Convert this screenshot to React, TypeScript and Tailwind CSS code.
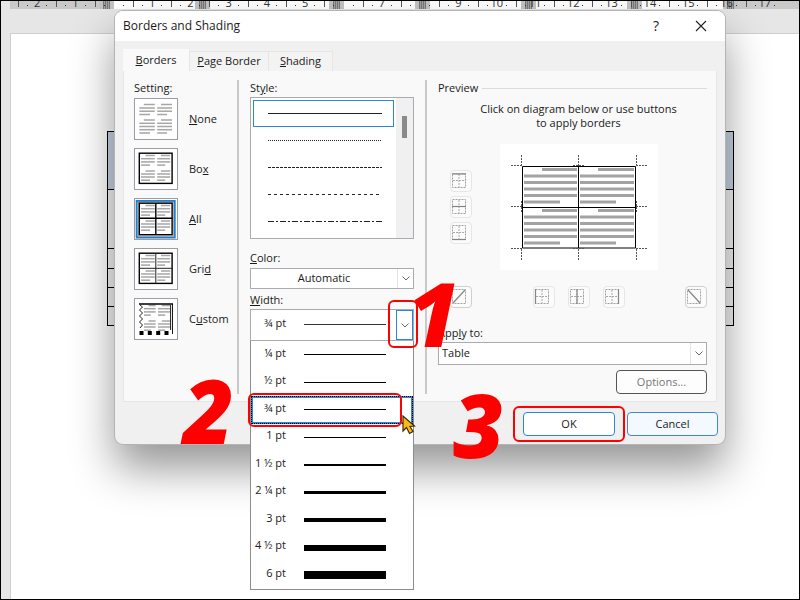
import { useState } from 'react';
import type { ReactNode } from 'react';

const rulerNumbers = ['2', '1', '', '1', '2', '3', '4', '5', '', '7', '', '9', '10', '11', '12', '13', '14', '15', '16', '17'];

const columnMarkers = [
  'left-[89px]',
  'left-[185px]',
  'left-[319px]',
  'left-[405px]',
  'left-[511px]',
  'left-[617px]',
  'left-[713px]',
];

const lineStyles = [
  { name: 'Solid', dash: '' },
  { name: 'Dotted', dash: '1 1' },
  { name: 'Short dash', dash: '3 1' },
  { name: 'Dash', dash: '3 3' },
  { name: 'Dash dot', dash: '6 2 2 2' },
];

const widths = [
  { label: '¼ pt', line: 'h-px' },
  { label: '½ pt', line: 'h-px' },
  { label: '¾ pt', line: 'h-px' },
  { label: '1 pt', line: 'h-px' },
  { label: '1 ½ pt', line: 'h-[2px]' },
  { label: '2 ¼ pt', line: 'h-[3px]' },
  { label: '3 pt', line: 'h-1' },
  { label: '4 ½ pt', line: 'h-[6px]' },
  { label: '6 pt', line: 'h-2' },
];

type Kind = 'none' | 'box' | 'all' | 'grid' | 'custom';

const settings: { kind: Kind; label: ReactNode }[] = [
  { kind: 'none', label: <><u>N</u>one</> },
  { kind: 'box', label: <>Bo<u>x</u></> },
  { kind: 'all', label: <><u>A</u>ll</> },
  { kind: 'grid', label: <>Gri<u>d</u></> },
  { kind: 'custom', label: <>C<u>u</u>stom</> },
];

const Chevron = () => (
  <svg viewBox="0 0 8 5" className="w-2 h-[5px]" fill="none" stroke="#666" strokeWidth="1">
    <path d="M0.5 0.5L4 4L7.5 0.5" />
  </svg>
);

const Ruler = () => (
  <div className="relative h-2 overflow-hidden bg-white ml-[9px] text-[11px] text-[#333]">
    <div className="absolute inset-y-0 left-0 w-[104px] bg-[#c9c9c9]" />
    <div className="absolute inset-y-0 left-[723px] right-0 bg-[#c9c9c9]" />
    {columnMarkers.map((pos) => (
      <div key={pos} className={`absolute inset-y-0 w-[15px] bg-[#c4c4c4] px-1 ${pos}`}>
        <div className="h-full bg-[repeating-linear-gradient(90deg,#777_0_1px,#a5a5a5_1px_2px)]" />
      </div>
    ))}
    <div className="relative flex h-2 ml-2 mr-[15px]">
      {rulerNumbers.map((n, i) => (
        <div key={i} className="relative flex-1 flex justify-between items-center px-[9px]">
          <span className="absolute left-0 top-0 w-px h-[6px] bg-[#555]" />
          <span className="w-px h-px bg-[#333]" />
          <span className="w-3 flex justify-center leading-none -mt-[5px]">{n}</span>
          <span className="w-px h-px bg-[#333]" />
        </div>
      ))}
    </div>
  </div>
);

const DocumentTable = () => (
  <table className="w-full border-collapse bg-[#f3f3f3]">
    <tbody>
      {['h-[58px] bg-[#c8d3e3]', 'h-[59px]', 'h-5', 'h-[19px]', 'h-[19px]', 'h-[19px]'].map((row, i) => (
        <tr key={i} className={row}>
          <td className="border border-black" />
        </tr>
      ))}
    </tbody>
  </table>
);

const SettingIcon = ({ kind }: { kind: Kind }) => {
  const framed = kind === 'box' || kind === 'all' || kind === 'grid';
  const rows = kind === 'none' ? [6.5, 10, 13.2, 16.5, 22, 25.3, 28.5, 31.7, 35] : [7.5, 10.7, 13.9, 17.1, 23, 26, 29, 32.2];
  const x = kind === 'custom' ? 10 : kind === 'none' ? 5.3 : 7;
  const end = kind === 'none' ? 38 : 36.2;
  const mid = kind === 'custom' ? 22.8 : 22;
  return (
    <svg viewBox="0 0 44 42" className="w-[44px] h-[42px] shrink-0">
      <rect x="0.5" y="0.5" width="43" height="41" fill="#fff" stroke="#9a9ca6" />
      {kind === 'all' && (
        <>
          <rect x="2.7" y="3" width="38" height="36.5" fill="#fff" stroke="#1b7fd4" strokeWidth="2" />
          <rect x="4.2" y="4.2" width="35" height="34" fill="none" stroke="#a79d94" />
        </>
      )}
      <g stroke="#a6a6a6" strokeWidth="1.5">
        {rows.map((y, i) => {
          const first = i === 0 || i === 4;
          const last = i === 3 || i === rows.length - 1;
          return (
            <g key={y}>
              <path d={`M${first ? x + 4.5 : x} ${y}H${last ? mid - 6 : mid - 1.2}`} />
              <path d={`M${first ? mid + 5 : mid + 1.2} ${y}H${last ? end - 5 : end}`} />
            </g>
          );
        })}
      </g>
      {framed && <rect x="5.3" y="5.2" width="32.8" height={kind === 'all' ? 31.5 : 30.2} fill="none" stroke="#000" strokeWidth="1.4" />}
      {kind === 'all' && <path d="M21.8 5V37M5 20.3H38.4" stroke="#000" strokeWidth="1.4" />}
      {kind === 'grid' && <path d="M21.8 5V36M5 20.3H38.4" stroke="#222" strokeWidth="1" />}
      {kind === 'custom' && (
        <>
          <path d="M5 6H39" stroke="#000" strokeWidth="1.6" />
          <path d="M38.5 6V36M36.6 7V32" stroke="#000" strokeWidth="0.9" />
          <path
            d="M6 7L8.5 9L5.5 12L8.5 15L5.5 18L8.5 21L5.5 24L8.5 27L6 30"
            fill="none"
            stroke="#222"
            strokeWidth="1"
          />
          <path d="M5.5 35H9.5M13.8 35H17.8M22.2 35H26.2M30.5 35H34.5" stroke="#000" strokeWidth="4" />
        </>
      )}
    </svg>
  );
};

const BorderButton = ({ label, line, strong }: { label: string; line: string; strong?: boolean }) => {
  const diagonal = line.includes('L');
  return (
    <button
      aria-label={label}
      className={`w-[22px] h-[22px] rounded border bg-[#fbfbfb] ${strong ? 'border-[#cfcfcf]' : 'border-[#e6e6e6]'}`}>
      <svg viewBox="0 0 20 20" className="w-5 h-5" fill="none">
        <rect x="1.5" y="2.5" width="13" height="14" stroke="#a0a0a0" strokeDasharray="2 1" />
        {!diagonal && <path d="M8 3V16M2 9.5H15" stroke="#aaa" strokeDasharray="2 1" />}
        <path d={line} stroke="#858585" strokeWidth="1.2" />
      </svg>
    </button>
  );
};

const PreviewDiagram = () => (
  <svg viewBox="0 0 158 126" className="w-[158px] h-[126px] bg-white" fill="none">
    <g fill="#a3a3a3">
      {[0, 41].map((dy) =>
        [24, 80].map((x) => (
          <g key={`${dy}-${x}`}>
            <rect x={x + 18} y={24 + dy} width={x === 24 ? 35 : 36} height="3" />
            {[30.5, 37, 43.5, 50].map((y) => (
              <rect key={y} x={x} y={y + dy} width={x === 24 ? 53 : 54} height="3" />
            ))}
            <rect x={x} y={56.5 + dy} width="36" height="3" />
          </g>
        ))
      )}
    </g>
    <path d="M22.5 22.5H135.5V104H22.5ZM78.5 22.5V104M22.5 63.5H135.5" stroke="#000" />
    <g stroke="#555" strokeDasharray="2 1">
      <path d="M11 21.5H22M73 21.5H84M136 21.5H147" />
      <path d="M11 62.5H22M136 62.5H147" />
      <path d="M11 104.5H22M73 104.5H84M136 104.5H147" />
      <path d="M21.5 11V22M78.5 11V22M136.5 11V22" />
      <path d="M21.5 57V68M136.5 57V68" />
      <path d="M21.5 105V116M78.5 105V116M136.5 105V116" />
    </g>
  </svg>
);

const Step = ({ n, className }: { n: string; className: string }) => (
  <span
    className={`absolute z-20 text-[88px] leading-none font-extrabold italic text-[#ff0000] pointer-events-none ${className}`}>
    {n}
  </span>
);

const App = () => {
  const [setting, setSetting] = useState<Kind>('all');
  const [width, setWidth] = useState('¾ pt');

  return (
    <div className="relative min-h-screen overflow-hidden flex flex-col border border-black bg-[#e6e6e6] font-['Open_Sans','Noto_Sans',sans-serif] text-[11px] text-[#1a1a1a]">
      <Ruler />
      <main className="flex-1 mt-6 ml-[9px] border-t border-l border-[#cfcfcf] bg-white pt-[97px] pl-24 pr-[65px]">
        <DocumentTable />
      </main>

      <div
        role="dialog"
        aria-labelledby="dialog-title"
        className="absolute top-[10px] left-[114px] right-[74px] rounded-lg bg-[#f0f0f0] ring-1 ring-[#b4b4b4] shadow-[0_24px_44px_rgba(0,0,0,0.42)]">
        <header className="flex items-center h-[30px] rounded-t-lg bg-white pl-2 pr-[18px]">
          <h1 id="dialog-title" className="flex-1 text-xs">Borders and Shading</h1>
          <button aria-label="Help" className="text-sm mr-9">?</button>
          <button aria-label="Close">
            <svg viewBox="0 0 12 12" className="w-3 h-3" stroke="#222" strokeWidth="1.1">
              <path d="M1 1L11 11M11 1L1 11" />
            </svg>
          </button>
        </header>

        <div role="tablist" className="flex items-end px-2 pt-2">
          <button role="tab" aria-selected="true" className="h-[22px] w-[66px] bg-[#f9f9f9]">
            <u>B</u>orders
          </button>
          <button role="tab" aria-selected="false" className="h-5 w-20 bg-[#f3f3f3] border border-b-0 border-[#e6e6e6]">
            <u>P</u>age Border
          </button>
          <button role="tab" aria-selected="false" className="h-5 w-16 bg-[#f3f3f3] border border-b-0 border-l-0 border-[#e6e6e6]">
            <u>S</u>hading
          </button>
        </div>

        <div className="mx-2 flex bg-[#f9f9f9] border border-t-0 border-[#e6e6e6] pt-[9px] pl-[10px] pr-[9px] pb-[7px]">
          <section className="w-[103px]">
            <h2 className="h-4 leading-4 mb-[2px]">Setting:</h2>
            <div className="flex flex-col gap-2">
              {settings.map((s) => (
                <button
                  key={s.kind}
                  aria-pressed={setting === s.kind}
                  onClick={() => setSetting(s.kind)}
                  className="flex items-center gap-[11px] text-left">
                  <SettingIcon kind={s.kind} />
                  <span>{s.label}</span>
                </button>
              ))}
            </div>
          </section>

          <div className="w-[2px] bg-[#c9c9c9] mr-[11px]" />

          <section className="w-[164px]">
            <h2 id="style-label" className="h-4 leading-4 mb-px">St<u>y</u>le:</h2>
            <div className="flex h-[142px] border border-[#a9abb3] bg-white">
              <ul role="listbox" aria-labelledby="style-label" className="flex-1 p-[2px]">
                {lineStyles.map((s, i) => (
                  <li
                    key={s.name}
                    role="option"
                    aria-label={s.name}
                    aria-selected={i === 0}
                    className={`flex items-center h-[27px] border pl-[14px] ${i === 0 ? 'border-[#2b88d8]' : 'border-transparent'}`}>
                    <svg className="w-[114px] h-px">
                      <path d="M0 0.5H114" stroke="#222" strokeDasharray={s.dash} />
                    </svg>
                  </li>
                ))}
              </ul>
              <div className="w-[17px] bg-[#f0f0f0] pt-[18px]">
                <div className="w-[5px] h-[22px] mx-auto bg-[#8a8a8a]" />
              </div>
            </div>

            <label htmlFor="color" className="block h-4 leading-4 mt-[11px] mb-[2px]"><u>C</u>olor:</label>
            <div className="relative">
              <select
                id="color"
                className="block w-full h-[21px] appearance-none border border-[#a9abb3] bg-white pr-4 text-center">
                <option>Automatic</option>
              </select>
              <span className="absolute inset-y-px right-px w-4 flex items-center justify-center border-l border-[#e3e3e3] pointer-events-none">
                <Chevron />
              </span>
            </div>

            <label htmlFor="width" className="block h-4 leading-4 mt-[3px] mb-px"><u>W</u>idth:</label>
            <div className="relative">
              <select
                id="width"
                value={width}
                onChange={(e) => setWidth(e.target.value)}
                className="block w-full h-8 appearance-none border border-[#a9abb3] bg-white pl-[13px] pb-[3px]">
                {widths.map((w) => (
                  <option key={w.label}>{w.label}</option>
                ))}
              </select>
              <span className="absolute top-[15px] left-[54px] right-7 h-px bg-[#333] pointer-events-none" />
              <span className="absolute inset-y-px right-px w-[17px] flex items-center justify-center border border-[#2b88d8] pointer-events-none">
                <Chevron />
              </span>
              <span className="absolute z-20 -top-[9px] -bottom-[7px] -right-1 w-[30px] border-2 border-[#ff0000] rounded-md pointer-events-none" />
              <Step n="1" className="-top-10 left-[158px]" />

              <ul
                role="listbox"
                aria-label="Line widths"
                className="absolute z-10 top-8 inset-x-0 h-[249px] flex flex-col border border-t-0 border-[#8d8d8d] bg-white">
                {widths.map((w) => (
                  <li
                    key={w.label}
                    role="option"
                    aria-selected={w.label === width}
                    onClick={() => setWidth(w.label)}
                    className={`relative flex-1 flex items-center pr-[25px] ${w.label === width ? 'outline-1 outline-dotted -outline-offset-1 outline-black border-2 border-[#2b88d8]' : 'border-2 border-transparent'}`}>
                    <span className="w-[33px] mr-[18px] text-right whitespace-nowrap pb-1">{w.label}</span>
                    <span className={`flex-1 ${w.line} bg-black`} />
                    {w.label === width && (
                      <>
                        <span className="absolute -inset-y-[5px] -left-[5px] right-[9px] border-2 border-[#ff0000] rounded-md" />
                        <Step n="2" className="-top-8 -left-[70px]" />
                        <svg viewBox="0 0 14 20" className="absolute z-20 top-[17px] -right-[5px] w-[14px] h-5">
                          <path
                            d="M1 1V16L4.5 12.5L7.5 18.5L11 16.5L8 11.5L12.5 11Z"
                            fill="#fdb913"
                            stroke="#3a2a08"
                            strokeWidth="1.2"
                          />
                        </svg>
                      </>
                    )}
                  </li>
                ))}
              </ul>
            </div>
          </section>

          <div className="w-[2px] bg-[#c9c9c9] ml-[11px] mr-[11px]" />

          <section className="flex-1">
            <div className="flex items-center h-4 gap-1">
              <h2>Preview</h2>
              <div className="flex-1 h-px bg-[#dcdcdc]" />
            </div>
            <div className="pl-3">
              <p className="mt-[6px] text-center leading-[14px]">
                Click on diagram below or use buttons
                <br />
                to apply borders
              </p>
              <div className="mt-[14px] grid grid-cols-[1fr_158px_1fr]">
                <div className="flex flex-col gap-1 pt-[26px]">
                  <BorderButton label="Top border" line="M1 3H15" />
                  <BorderButton label="Inside horizontal border" line="M1 9.5H15" />
                  <BorderButton label="Bottom border" line="M1 16.5H15" />
                </div>
                <PreviewDiagram />
              </div>
              <div className="mt-4 flex justify-between">
                <BorderButton label="Diagonal up border" line="M2 16L14 3" strong />
                <div className="flex gap-[13px]">
                  <BorderButton label="Left border" line="M1.5 2V17" />
                  <BorderButton label="Inside vertical border" line="M8 2V17" />
                  <BorderButton label="Right border" line="M14.5 2V17" />
                </div>
                <BorderButton label="Diagonal down border" line="M2 3L14 16" strong />
              </div>
            </div>
            <label htmlFor="apply" className="block h-4 leading-4 mt-[17px] mb-px">App<u>l</u>y to:</label>
            <div className="relative">
              <select
                id="apply"
                className="block w-full h-[23px] appearance-none border border-[#a9abb3] bg-white pl-[3px]">
                <option>Table</option>
              </select>
              <span className="absolute inset-y-px right-px w-4 flex items-center justify-center border-l border-[#e3e3e3] pointer-events-none">
                <Chevron />
              </span>
            </div>
            <div className="mt-[5px] flex justify-end">
              <button disabled className="w-[91px] h-6 rounded border border-[#555] bg-[#fdfdfd] text-[#777]">
                Options...
              </button>
            </div>
          </section>
        </div>

        <footer className="flex justify-end gap-3 pt-[10px] pb-2 pr-[7px]">
          <div className="relative">
            <button className="block w-[92px] h-6 rounded border border-[#2b88d8] bg-white">OK</button>
            <span className="absolute -inset-y-[6px] -inset-x-[10px] border-2 border-[#ff0000] rounded-md pointer-events-none" />
            <Step n="3" className="-top-8 -left-[70px]" />
          </div>
          <button className="w-[91px] h-6 rounded border border-[#3f8bc9] bg-[#f3f9fe]">Cancel</button>
        </footer>
      </div>
    </div>
  );
};

export default App;
